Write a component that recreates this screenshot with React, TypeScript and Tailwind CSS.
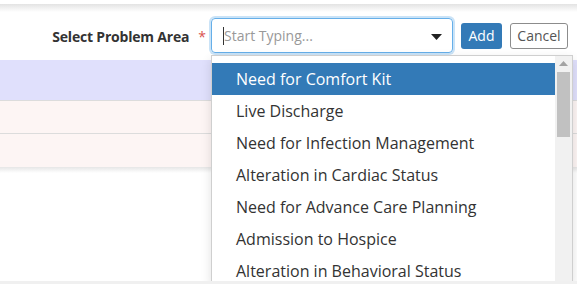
import React from "react";

const items = [
  "Need for Comfort Kit",
  "Live Discharge",
  "Need for Infection Management",
  "Alteration in Cardiac Status",
  "Need for Advance Care Planning",
  "Admission to Hospice",
  "Alteration in Behavioral Status",
];

export default function App() {
  return (
    <div
      className="relative w-[577px] h-[284px] overflow-hidden bg-white text-[#333]"
      style={{ fontFamily: '"Open Sans", "Liberation Sans", sans-serif' }}
    >
      <div className="h-[4px] bg-white" />
      <div className="h-[8px] bg-gradient-to-b from-[#e3e3e3] to-white" />
      <div className="h-[48px] flex items-center justify-end pr-[9px]">
        <span className="text-[14px] font-bold text-[#333] tracking-[-0.2px]">Select Problem Area</span>
        <span className="ml-[9px] mr-[5px] text-[14px] text-[#d9534f]">*</span>
        <div className="w-[242px] h-[35px] mb-[1px] rounded-[4px] border border-[#66afe9] shadow-[0_0_0_2px_rgba(102,175,233,0.35)] flex items-center pl-[11px] pr-[10px]">
          <span className="w-px h-[18px] bg-[#333]" />
          <span className="text-[14px] text-[#999] flex-1">Start Typing...</span>
          <svg width="11" height="6" viewBox="0 0 11 6" className="mt-[2px]">
            <path d="M0 0 L11 0 L5.5 6 Z" fill="#222" />
          </svg>
        </div>
        <button className="ml-[8px] w-[41px] h-[26px] rounded-[3px] bg-[#337ab7] text-white text-[14px] leading-none">
          Add
        </button>
        <button className="ml-[8px] w-[58px] h-[26px] rounded-[3px] border border-[#8c8c8c] bg-white text-[#555] text-[14px] leading-none">
          Cancel
        </button>
      </div>
      <div className="h-[40px] bg-[#e0e0fc]" />
      <div className="h-px bg-[#dcdcdc]" />
      <div className="h-[32px] bg-[#fdf5f4]" />
      <div className="h-px bg-[#dcdcdc]" />
      <div className="h-[33px] bg-[#fdf5f4]" />
      <div className="h-[6px] bg-gradient-to-b from-[#e6e6e6] to-white" />

      <div className="absolute left-[211px] top-[55px] w-[362px] h-[229px] bg-white border border-[#cfcfcf] flex shadow-[0_4px_10px_rgba(0,0,0,0.12)]">
        <div className="flex-1 pt-[7px] overflow-hidden">
          {items.map((t, i) => (
            <div
              key={t}
              className={
                "h-[32px] flex items-center pl-[24px] text-[16px] whitespace-nowrap " +
                (i === 0 ? "bg-[#337ab7] text-white" : "text-[#333]")
              }
            >
              {t}
            </div>
          ))}
        </div>
        <div className="w-[17px] bg-[#f1f1f1] flex flex-col items-center pt-[5px]">
          <svg width="9" height="5" viewBox="0 0 9 5">
            <path d="M0 5 L9 5 L4.5 0 Z" fill="#a3a3a3" />
          </svg>
          <div className="mt-[6px] w-[13px] h-[65px] bg-[#c1c1c1]" />
        </div>
      </div>
      <div className="absolute left-0 bottom-0 w-full h-[3px] bg-[#f0f0f0]" />
    </div>
  );
}
